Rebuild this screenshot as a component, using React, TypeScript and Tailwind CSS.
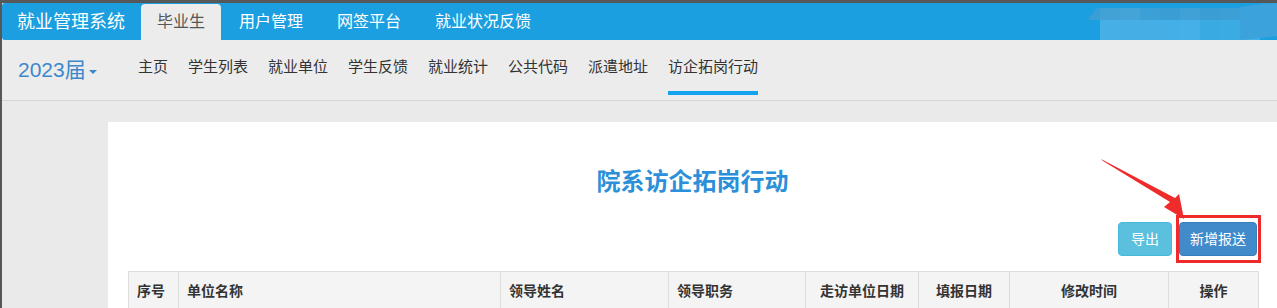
import React from "react";

const topTabs = ["用户管理", "网签平台", "就业状况反馈"];
const subNav = ["主页", "学生列表", "就业单位", "学生反馈", "就业统计", "公共代码", "派遣地址", "访企拓岗行动"];

const columns = [
  { title: "序号", w: "w-[50px]", align: "text-left" },
  { title: "单位名称", w: "w-[322px]", align: "text-left" },
  { title: "领导姓名", w: "w-[168px]", align: "text-left" },
  { title: "领导职务", w: "w-[137px]", align: "text-left" },
  { title: "走访单位日期", w: "w-[113px]", align: "text-center" },
  { title: "填报日期", w: "w-[91px]", align: "text-center" },
  { title: "修改时间", w: "w-[159px]", align: "text-center" },
  { title: "操作", w: "w-[90px]", align: "text-center" },
];

// blurred mosaic in the top right corner of the screenshot
const mosaicTop = ["#42a2d6", "#44a3d7", "#3c9fd5", "#3a9ed5", "#3fa1d6", "#3a9ed5", "#3ca0d6", "#40a4da"];
const mosaicBottom = ["#46b0e6", "#45afe5", "#44aee5", "#44afe6", "#45b0e7", "#3aaae3", "#3babe4", "#43b0e8"];

const Mosaic = () => (
  <svg className="absolute left-[1087px] top-[3px]" width="190" height="37" viewBox="0 0 190 37">
    <polygon points="0,17 10,5 13,5 13,17" fill="#3a9ed6" />
    {mosaicTop.map((c, i) => (
      <rect key={"t" + i} x={13 + i * 20} y={5} width={20} height={12} fill={c} />
    ))}
    {mosaicBottom.map((c, i) => (
      <rect key={"b" + i} x={13 + i * 20} y={17} width={20} height={20} fill={c} />
    ))}
    <polygon points="153,4 175,1 190,0 190,33 175,35 153,37" fill="#3ba2dc" />
  </svg>
);

const Arrow = () => (
  <svg className="absolute left-[1095px] top-[150px]" width="100" height="80" viewBox="0 0 100 80">
    <polygon points="6,9 80,48 84,44 89,69 69,57 75,52 8,11" fill="#ef2b2b" />
  </svg>
);

const App = () => {
  return (
    <div className="relative w-[1277px] h-[308px] overflow-hidden bg-[#555759] pt-[3px] pl-[2px] font-['Liberation_Sans','Noto_Sans_CJK_SC',sans-serif]">
      <div className="h-full flex flex-col bg-[#eaeaea]">
        {/* top bar */}
        <div className="h-[37px] shrink-0 flex items-end bg-[#1c9fe0] rounded-l-[3px] pl-[15px]">
          <div className="self-center mr-[16px] text-[18px] leading-[24px] text-white">就业管理系统</div>
          <div className="flex items-end gap-[2px]">
            <div className="h-[36px] px-4 flex items-center rounded-t-[4px] bg-[#ececec] text-[16px] text-[#555]">毕业生</div>
            {topTabs.map((t) => (
              <div key={t} className="h-[36px] px-4 flex items-center text-[16px] text-white">
                {t}
              </div>
            ))}
          </div>
        </div>

        {/* sub nav */}
        <div className="h-[61px] shrink-0 flex bg-[#ececec] border-b border-[#d6d6d6]">
          <div className="w-[110px] ml-[16px] flex items-center text-[21px] leading-[28px] text-[#3d88cb]">
            2023届
            <span className="ml-[3px] mt-[3px] w-0 h-0 border-x-[4px] border-x-transparent border-t-[4px] border-t-[#3d88cb]" />
          </div>
          <div className="flex">
            {subNav.map((n, i) => (
              <div key={n} className="px-[10px] flex flex-col">
                <span className="pt-[17px] text-[15px] leading-[20px] text-[#333]">{n}</span>
                {i === subNav.length - 1 && <span className="mt-[14px] h-[4px] bg-[#12a4ee]" />}
              </div>
            ))}
          </div>
        </div>

        {/* body */}
        <div className="flex-1 pl-[106px] pt-[21px]">
          <div className="h-full bg-white px-5 pt-[44px]">
            <h2 className="text-center text-[24px] leading-[32px] font-bold text-[#2b90d9]">院系访企拓岗行动</h2>

            <div className="mt-[24px] flex justify-end gap-[7px]">
              <button className="w-[54px] h-[34px] rounded-[4px] border border-[#46b8da] bg-[#5bc0de] text-[14px] text-white">
                导出
              </button>
              <div className="relative">
                <button className="w-[78px] h-[34px] rounded-[4px] border border-[#357ebd] bg-[#428bca] text-[14px] text-white">
                  新增报送
                </button>
                <div className="absolute -left-[3px] -right-[4px] -top-[7px] -bottom-[7px] border-[3px] border-[#ee2a2a]" />
              </div>
            </div>

            <table className="mt-[15px] w-[1130px] table-fixed border-collapse">
              <thead>
                <tr className="bg-[#f4f4f4]">
                  {columns.map((c) => (
                    <th
                      key={c.title}
                      className={`${c.w} ${c.align} border border-[#dddddd] px-2 py-[8px] text-[14px] leading-[22px] font-bold text-[#333]`}
                    >
                      {c.title}
                    </th>
                  ))}
                </tr>
              </thead>
            </table>
          </div>
        </div>
      </div>

      <Mosaic />
      <Arrow />
    </div>
  );
};

export default App;
